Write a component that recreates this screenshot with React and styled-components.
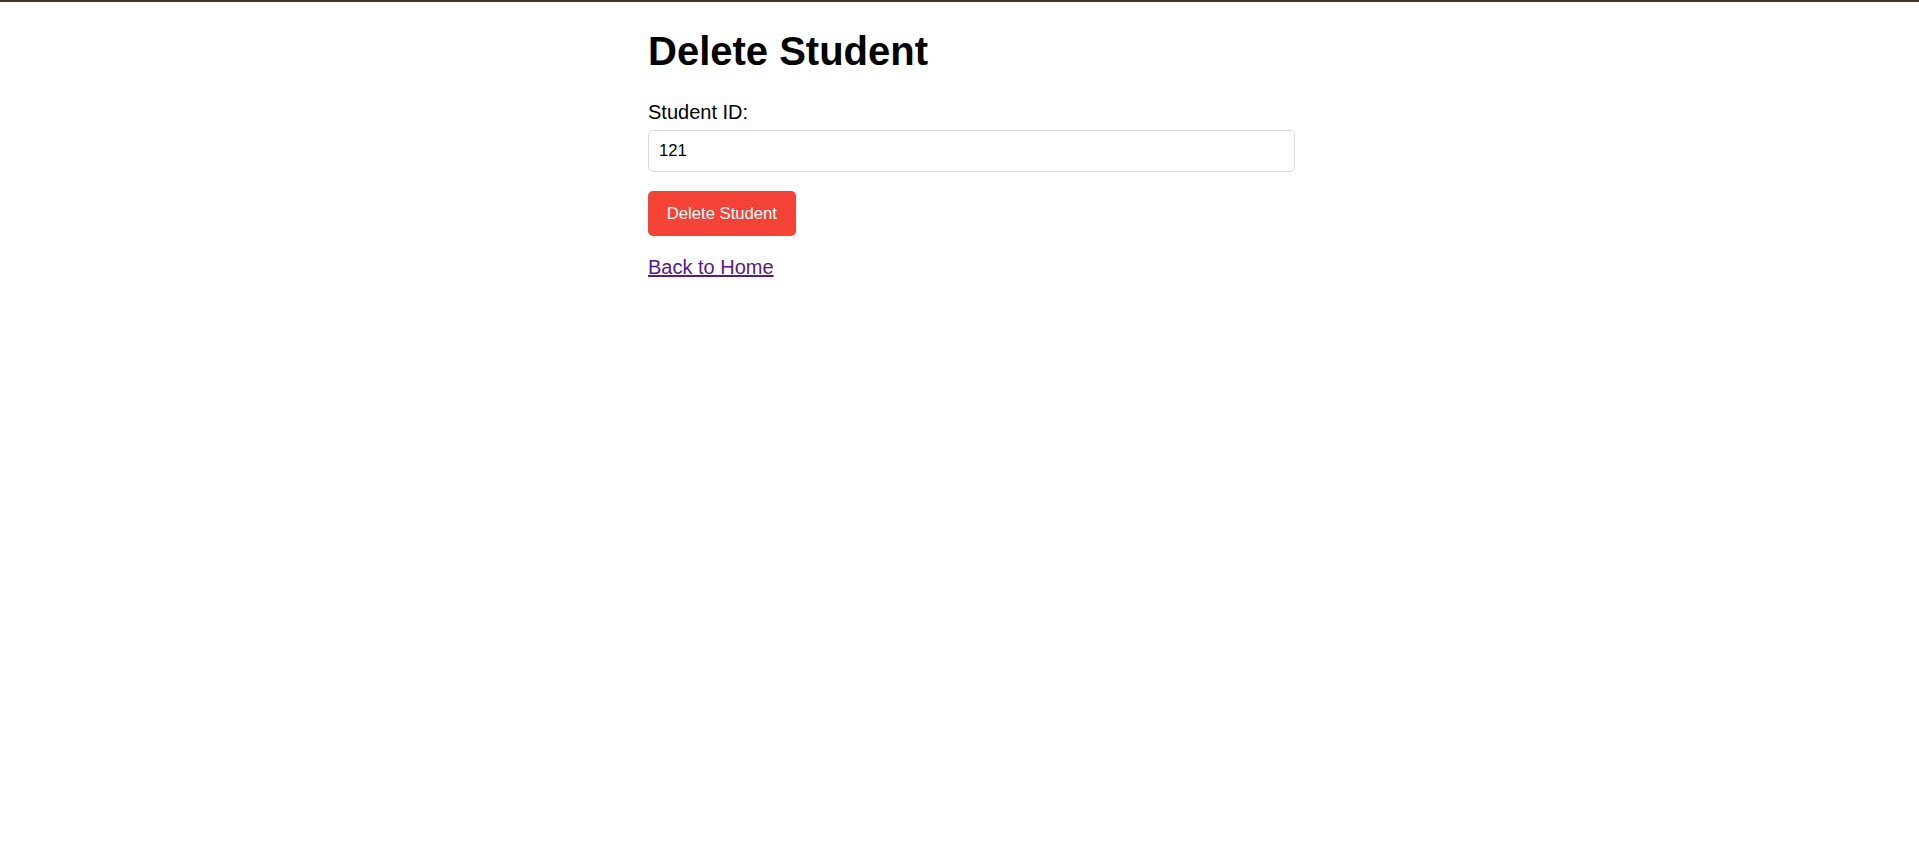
import React, { useState } from "react";
import styled, { createGlobalStyle } from "styled-components";

const GlobalStyle = createGlobalStyle`
  html, body {
    margin: 0;
    padding: 0;
    background: #fff;
  }
  body {
    font-family: "Liberation Sans", Arial, sans-serif;
    color: #000;
    border-top: 2px solid #4b3527;
  }
`;

export default function App() {
  let [studentId, setStudentId] = useState("121");

  function handleSubmit(e) {
    e.preventDefault();
  }

  return (
    <Page>
      <GlobalStyle />
      <Title>Delete Student</Title>
      <Form onSubmit={handleSubmit}>
        <Label htmlFor="studentId">Student ID:</Label>
        <Input
          id="studentId"
          type="text"
          value={studentId}
          onChange={(e) => setStudentId(e.target.value)}
        />
        <DeleteButton type="submit">Delete Student</DeleteButton>
      </Form>
      <HomeLink href="#home">Back to Home</HomeLink>
    </Page>
  );
}

const Page = styled.main`
  display: flex;
  flex-direction: column;
  align-items: flex-start;
  width: 647px;
  padding: 26px 0 0 648px;
  font-family: "Liberation Sans", Arial, sans-serif;
`;

const Title = styled.h1`
  margin: 0;
  font-size: 40px;
  line-height: 46px;
  font-weight: 700;
`;

const Form = styled.form`
  display: flex;
  flex-direction: column;
  align-items: flex-start;
  width: 100%;
  margin-top: 27px;
`;

const Label = styled.label`
  font-size: 20px;
  line-height: 23px;
  margin-bottom: 6px;
`;

const Input = styled.input`
  box-sizing: border-box;
  width: 100%;
  height: 42px;
  padding: 0 10px;
  border: 1px solid #dadada;
  border-radius: 5px;
  font-family: "Liberation Sans", Arial, sans-serif;
  font-size: 16.67px;
  color: #000;
  outline: none;
`;

const DeleteButton = styled.button`
  box-sizing: border-box;
  margin-top: 19px;
  height: 45px;
  padding: 0 18.75px;
  border: none;
  border-radius: 5px;
  background: #f44336;
  color: #fff;
  font-family: "Liberation Sans", Arial, sans-serif;
  font-size: 16.67px;
  cursor: pointer;
`;

const HomeLink = styled.a`
  margin-top: 20px;
  font-size: 20px;
  line-height: 23px;
  color: #551a8b;
  text-decoration: underline;
`;
